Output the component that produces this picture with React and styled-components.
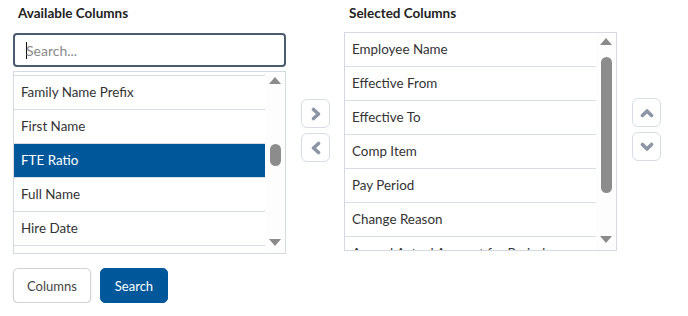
import React, { useLayoutEffect, useRef } from 'react'
import styled, { createGlobalStyle } from 'styled-components'

const GlobalStyle = createGlobalStyle`
  body {
    margin: 0;
    background: #fff;
    font-family: Lato, "Open Sans", sans-serif;
    color: #333;
  }
`

const available = [
  'Employee ID',
  'Employee Name',
  'Family Name',
  'Family Name Prefix',
  'First Name',
  'FTE Ratio',
  'Full Name',
  'Hire Date',
  'Job Title',
  'Last Name',
]

const selected = [
  'Employee Name',
  'Effective From',
  'Effective To',
  'Comp Item',
  'Pay Period',
  'Change Reason',
  'Annual Actual Amount for Period',
  'Currency',
]

const Page = styled.div`
  display: flex;
  flex-direction: column;
  padding: 3px 0 0 13px;
`

const Picker = styled.div`
  display: flex;
  align-items: flex-start;
`

const Column = styled.div`
  display: flex;
  flex-direction: column;
  width: 274px;
`

const Heading = styled.div`
  font-size: 13.5px;
  font-weight: 700;
  line-height: 20px;
  color: #222;
  padding-left: ${p => p.indent}px;
`

const SearchInput = styled.div`
  box-sizing: border-box;
  margin-top: 10px;
  height: 34px;
  width: 273px;
  border: 2px solid #4a5c6d;
  border-radius: 4px;
  display: flex;
  align-items: center;
  padding-left: 11px;
  font-size: 14px;
  color: #8a8a8a;

  .caret {
    width: 1px;
    height: 17px;
    background: #111;
    margin-right: -1px;
  }
`

const ListBox = styled.div`
  box-sizing: border-box;
  margin-top: ${p => p.top}px;
  height: ${p => p.height}px;
  width: 273px;
  border: 1px solid #d3dae2;
  display: flex;
`

const Rows = styled.div`
  flex: 1;
  overflow: hidden;
`

const Row = styled.div`
  height: 33px;
  line-height: 32px;
  border-bottom: 1px solid #d6dde5;
  padding-left: 7px;
  font-size: 13.4px;
  white-space: nowrap;
  color: ${p => (p.active ? '#fff' : '#333')};
  background: ${p => (p.active ? '#00589a' : '#fff')};
`

const Scrollbar = styled.div`
  width: 20px;
  display: flex;
  flex-direction: column;
  align-items: center;
  background: #fdfdfd;
`

const Triangle = styled.div`
  width: 0;
  height: 0;
  border-left: 6px solid transparent;
  border-right: 6px solid transparent;
  ${p => (p.down ? 'border-top: 7px solid #8a8a8a;' : 'border-bottom: 7px solid #8a8a8a;')}
  margin: ${p => (p.down ? '0 0 7px' : '5px 0 0')};
`

const Track = styled.div`
  flex: 1;
  width: 100%;
  display: flex;
  flex-direction: column;
  align-items: center;
`

const Thumb = styled.div`
  width: 11px;
  border-radius: 6px;
  background: #8c8c8c;
`

const Side = styled.div`
  display: flex;
  flex-direction: column;
  gap: 5px;
  padding-top: ${p => p.top}px;
  margin: 0 ${p => p.right}px 0 ${p => p.left}px;
`

const IconButton = styled.button`
  box-sizing: border-box;
  width: 29px;
  height: 29px;
  padding: 0;
  background: #fff;
  border: 1px solid #d6dde6;
  border-radius: 6px;
  display: flex;
  align-items: center;
  justify-content: center;
`

const Actions = styled.div`
  display: flex;
  gap: 9px;
  margin-top: 14px;
`

const Button = styled.button`
  box-sizing: border-box;
  height: 35px;
  padding: 0 ${p => (p.primary ? 14 : 13)}px;
  border-radius: 5px;
  font-family: Lato, sans-serif;
  font-size: 13px;
  border: 1px solid ${p => (p.primary ? '#00589a' : '#d2d2d2')};
  background: ${p => (p.primary ? '#00589a' : '#fff')};
  color: ${p => (p.primary ? '#fff' : '#444')};
  box-shadow: ${p => (p.primary ? 'none' : '0 1px 2px rgba(0,0,0,0.12)')};
`

const Chevron = ({ dir }) => {
  const pts = {
    right: '4.5,2.5 9.5,7 4.5,11.5',
    left: '9.5,2.5 4.5,7 9.5,11.5',
    up: '2.5,9.5 7,5 11.5,9.5',
    down: '2.5,4.5 7,9 11.5,4.5',
  }[dir]
  return (
    <svg width="14" height="14" viewBox="0 0 14 14">
      <polyline points={pts} fill="none" stroke="#8d96a7" strokeWidth="3.6" strokeLinecap="round" strokeLinejoin="round" />
    </svg>
  )
}

const List = ({ items, active, scroll, top, height, thumbTop, thumbHeight }) => {
  const ref = useRef(null)
  useLayoutEffect(() => {
    if (ref.current) ref.current.scrollTop = scroll
  }, [scroll])
  return (
    <ListBox top={top} height={height}>
      <Rows ref={ref}>
        {items.map(item => (
          <Row key={item} active={item === active}>{item}</Row>
        ))}
      </Rows>
      <Scrollbar>
        <Triangle />
        <Track>
          <Thumb style={{ marginTop: thumbTop, height: thumbHeight }} />
        </Track>
        <Triangle down />
      </Scrollbar>
    </ListBox>
  )
}

export default function App() {
  return (
    <Page>
      <GlobalStyle />
      <Picker>
        <Column>
          <Heading indent={5}>Available Columns</Heading>
          <SearchInput>
            <span className="caret" />
            Search...
          </SearchInput>
          <List
            items={available}
            active="FTE Ratio"
            scroll={98}
            top={4}
            height={183}
            thumbTop={60}
            thumbHeight={22}
          />
        </Column>
        <Side top={96} left={14} right={14}>
          <IconButton><Chevron dir="right" /></IconButton>
          <IconButton><Chevron dir="left" /></IconButton>
        </Side>
        <Column>
          <Heading indent={5}>Selected Columns</Heading>
          <List
            items={selected}
            scroll={0}
            top={9}
            height={219}
            thumbTop={12}
            thumbHeight={136}
          />
        </Column>
        <Side top={95} left={14} right={0}>
          <IconButton><Chevron dir="up" /></IconButton>
          <IconButton><Chevron dir="down" /></IconButton>
        </Side>
      </Picker>
      <Actions>
        <Button>Columns</Button>
        <Button primary>Search</Button>
      </Actions>
    </Page>
  )
}
